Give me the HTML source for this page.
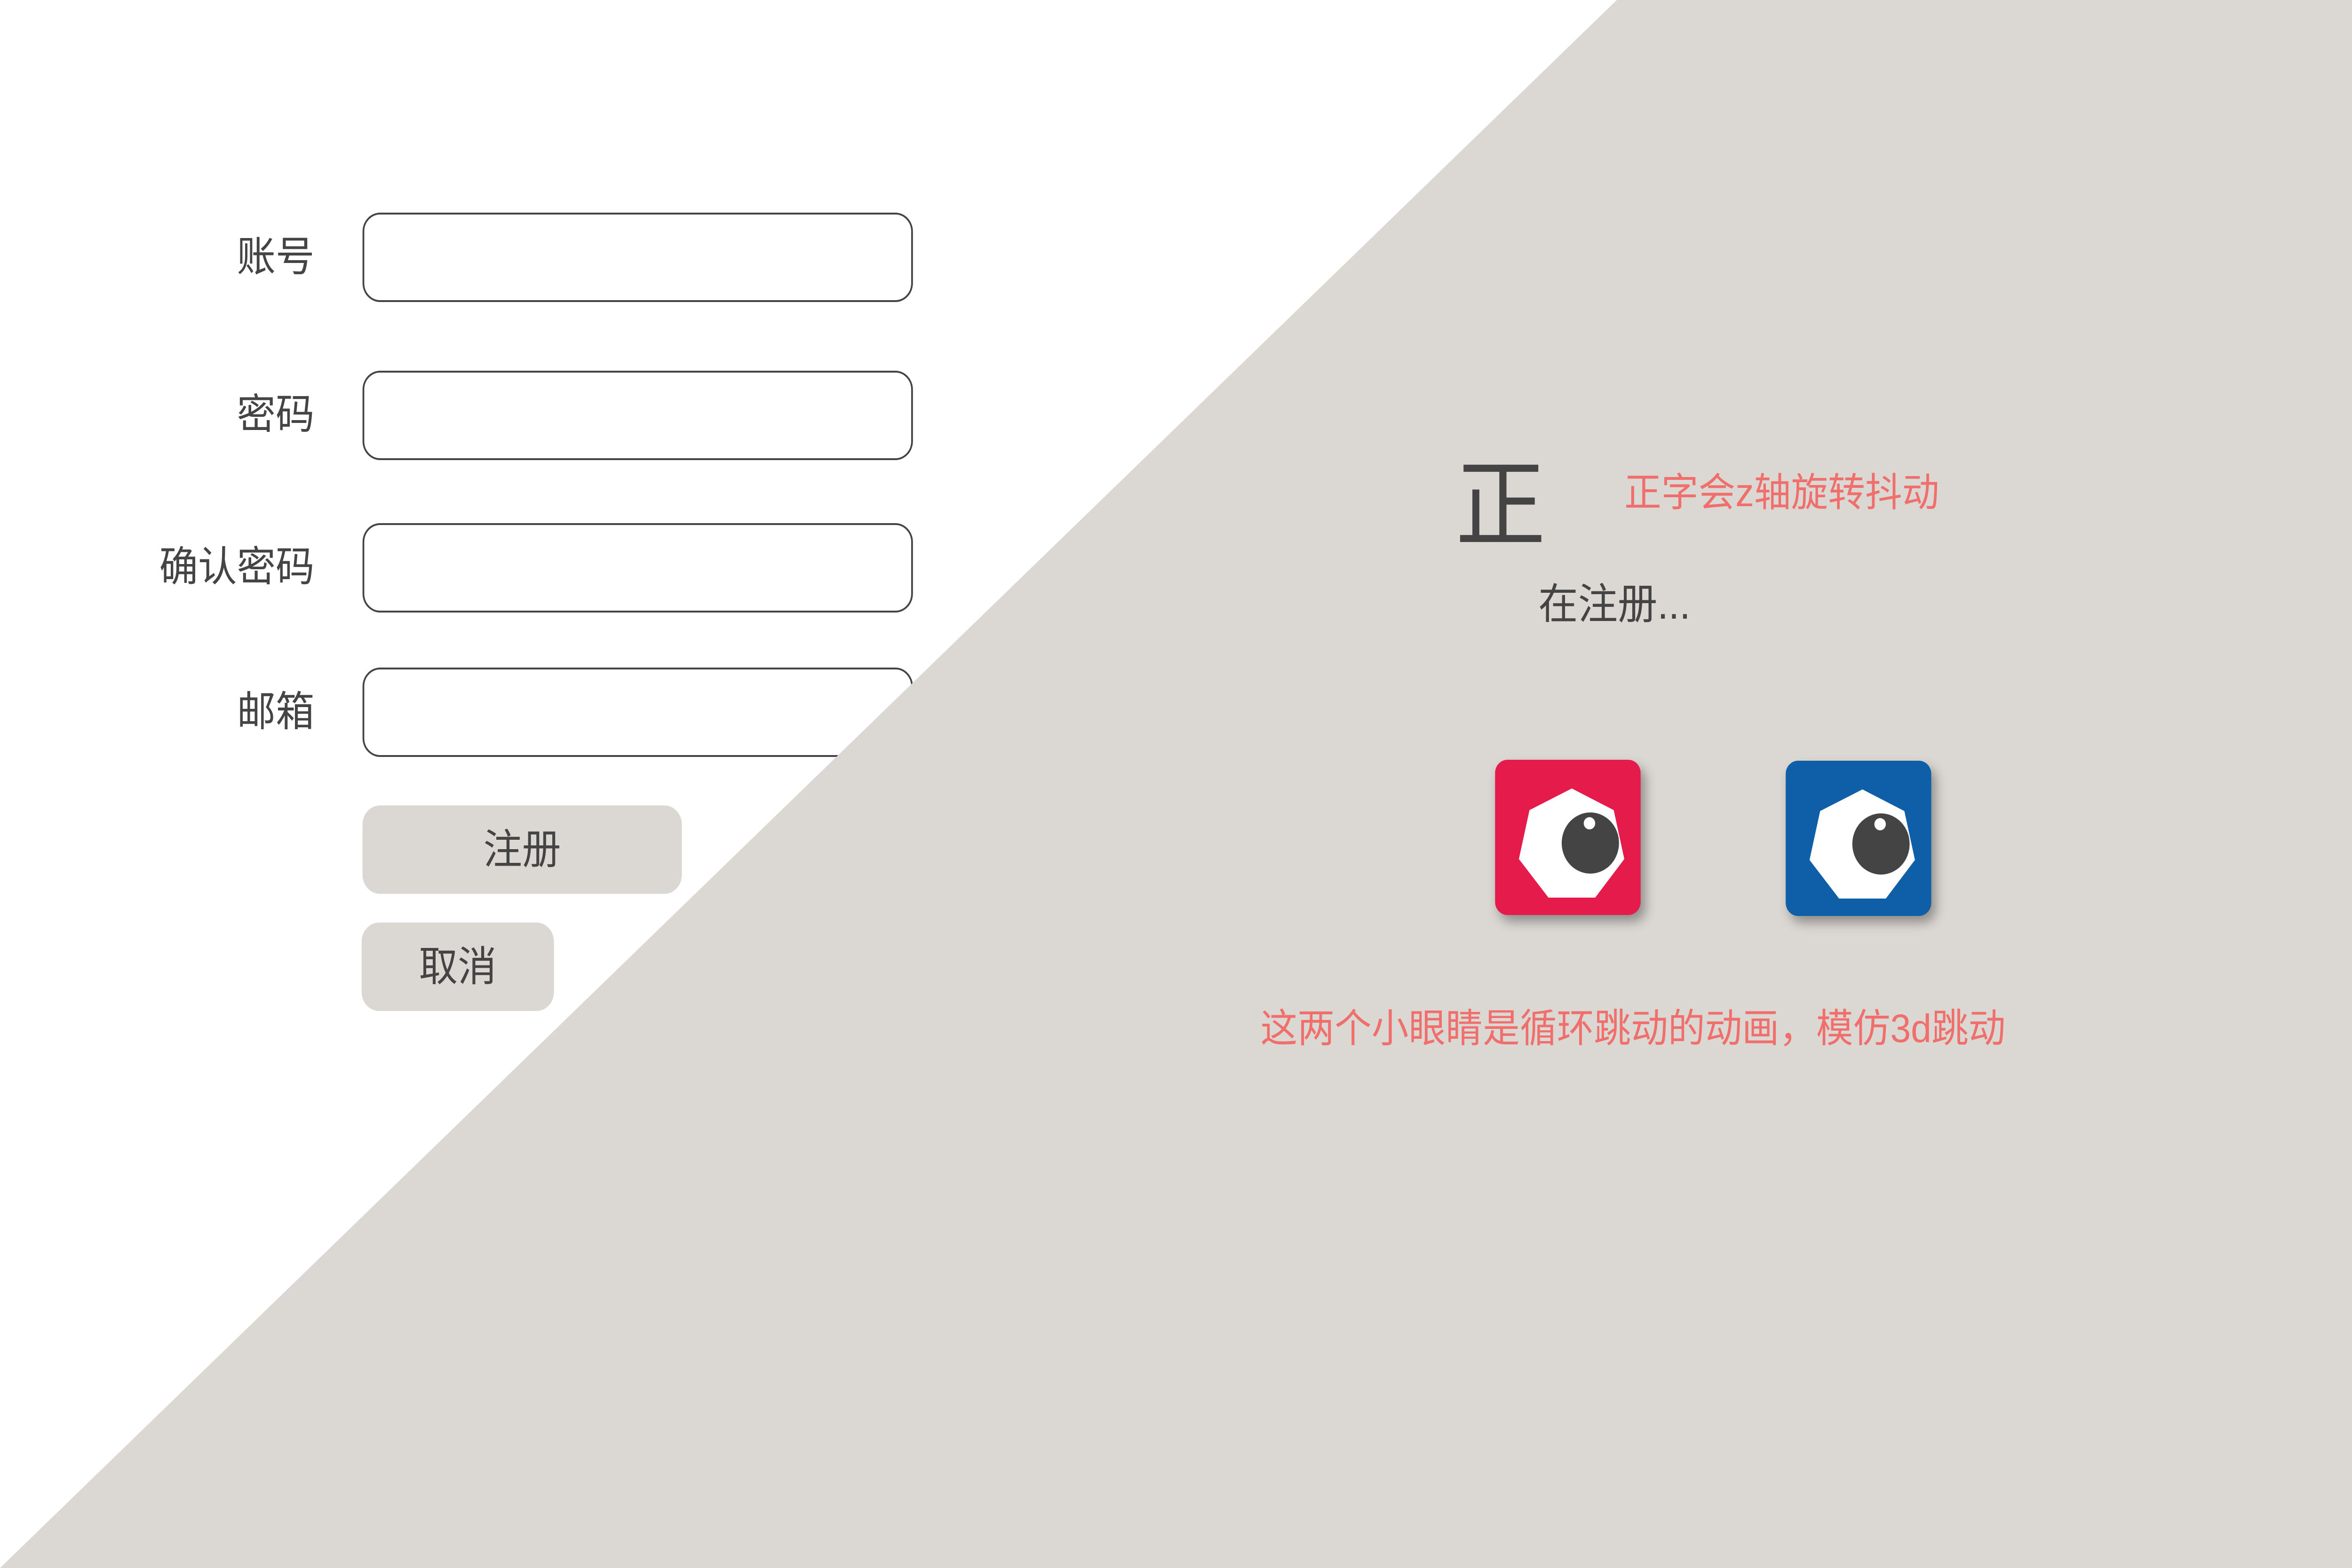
<!DOCTYPE html>
<html><head><meta charset="utf-8"><style>
*{margin:0;padding:0;box-sizing:border-box}
html,body{width:100%;height:100%;overflow:hidden;background:#fff}
#w{position:absolute;left:0;top:0;width:5333px;height:3333px;transform-origin:0 0;font-family:"Liberation Sans","Noto Sans CJK SC",sans-serif;color:#444}
.bg{position:absolute;left:0;top:0;z-index:2}
.lbl{position:absolute;left:200px;width:513px;justify-content:flex-end;font-size:88px;line-height:1;height:190px;display:flex;align-items:center;white-space:nowrap}
.inp{position:absolute;left:822px;width:1248px;height:190px;border:4px solid #444;border-radius:40px;background:#fff;z-index:1}
.btn{position:absolute;background:#dbd8d3;border-radius:40px;font-size:88px;display:flex;align-items:center;justify-content:center;line-height:1;z-index:3}
.t{position:absolute;white-space:nowrap;line-height:1;z-index:3}
.card{position:absolute;width:330px;height:330px;border-radius:28px;box-shadow:10px 14px 24px rgba(0,0,0,.35);z-index:3}
</style></head><body>
<div id="w">
<svg class="bg" width="5333" height="3333"><polygon points="3666,0 5333,0 5333,3333 0,3333" fill="#dbd8d3"/></svg>

<div class="lbl" style="top:451px">账号</div>
<div class="inp" style="top:452px"></div>
<div class="lbl" style="top:786px">密码</div>
<div class="inp" style="top:788px"></div>
<div class="lbl" style="top:1110px">确认密码</div>
<div class="inp" style="top:1112px"></div>
<div class="lbl" style="top:1418px">邮箱</div>
<div class="inp" style="top:1419px"></div>

<div class="btn" style="left:822px;top:1712px;width:724px;height:188px">注册</div>
<div class="btn" style="left:820px;top:1961px;width:436px;height:188px">取消</div>

<div class="t" style="left:3300px;top:972px;font-size:205px">正</div>
<div class="t" style="left:3683px;top:1005px;font-size:84px;color:#f06e6b">正字会z轴旋转抖动</div>
<div class="t" style="left:3488px;top:1240px;font-size:90px">在注册...</div>

<div class="card" style="left:3390px;top:1615px;background:#e51b4b">
<svg width="330" height="330"><polygon points="174,61 269,107 293,211 227,293 121,293 54,211 78,107" fill="#fff"/><circle cx="216" cy="177" r="65" fill="#444"/><circle cx="214" cy="135" r="13" fill="#fff"/></svg></div>
<div class="card" style="left:4049px;top:1617px;background:#0e5ea8">
<svg width="330" height="330"><polygon points="174,61 269,107 293,211 227,293 121,293 54,211 78,107" fill="#fff"/><circle cx="216" cy="177" r="65" fill="#444"/><circle cx="214" cy="135" r="13" fill="#fff"/></svg></div>

<div class="t" style="left:2858px;top:2144px;font-size:84px;color:#f06e6b">这两个小眼睛是循环跳动的动画，模仿3d跳动</div>
</div>
<script>
(function(){var w=document.getElementById('w');function f(){var sx=window.innerWidth/5333,sy=window.innerHeight/3333;w.style.transform='scale('+sx+','+sy+')';}f();window.addEventListener('resize',f);})();
</script>
</body></html>
